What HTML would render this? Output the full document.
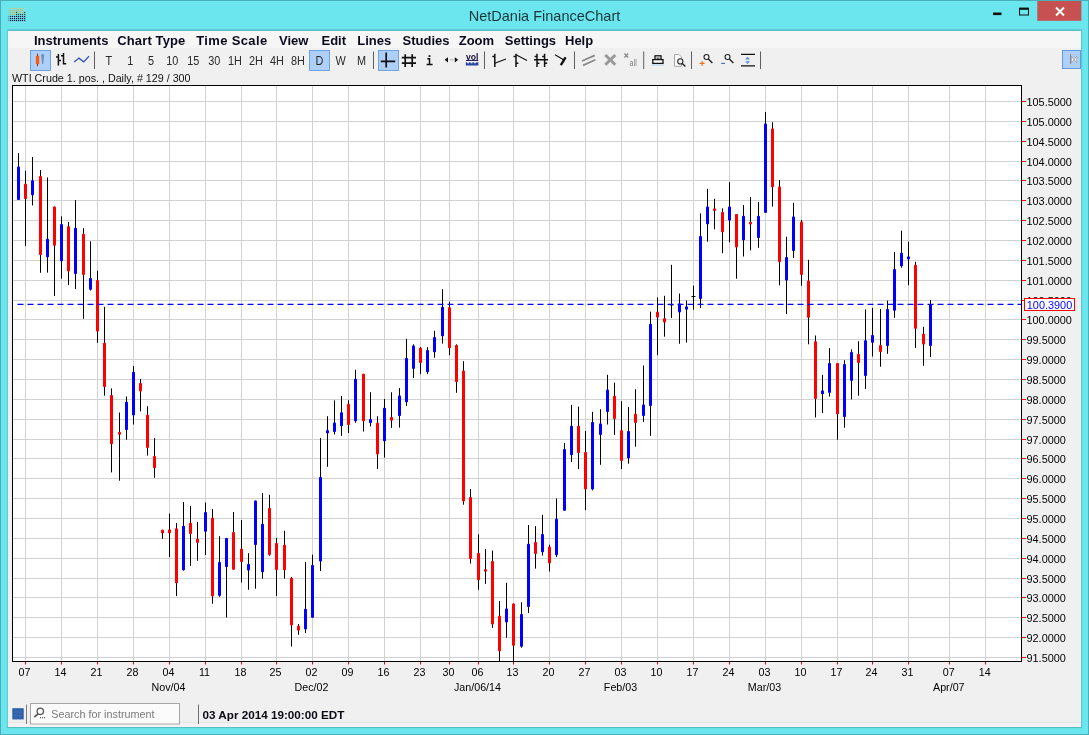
<!DOCTYPE html>
<html><head><meta charset="utf-8"><title>NetDania FinanceChart</title>
<style>html,body{margin:0;padding:0;background:#6be6ee;overflow:hidden}body{width:1089px;height:735px;position:relative;font-family:"Liberation Sans",Arial,sans-serif}</style>
</head><body>
<svg width="1089" height="735" viewBox="0 0 1089 735" style="position:absolute;left:0;top:0;display:block" font-family="Liberation Sans, Arial, sans-serif">
<defs><filter id="gs" filterUnits="userSpaceOnUse" x="0" y="0" width="1089" height="735" color-interpolation-filters="sRGB"><feOffset dx="0" dy="0"/></filter></defs><g filter="url(#gs)">
<rect x="0" y="0" width="1089" height="735" fill="#6be6ee"/>
<rect x="0.5" y="0.5" width="1088" height="734" fill="none" stroke="#49aeb8"/>
<rect x="7" y="29.3" width="1075" height="1.7" fill="#5abfc8"/>
<rect x="6.8" y="29" width="1.2" height="699" fill="#5fd0d8"/><rect x="1081" y="29" width="1.2" height="699" fill="#5cc8d0"/><rect x="7" y="727" width="1075" height="1.2" fill="#56bec6"/>
<rect x="8" y="31" width="1073" height="696" fill="#f0f0f0"/>
<rect x="8" y="722" width="1073" height="1" fill="#e3e7e3"/><rect x="8" y="723" width="1073" height="4" fill="#f4f2f4"/>
<rect x="8" y="31" width="1073" height="17" fill="#f6f6f6"/>
<rect x="7.9" y="7.9" width="1.2" height="1.2" fill="#dcc070" opacity="0.35"/>
<rect x="9.9" y="7.9" width="1.2" height="1.2" fill="#dcc070"/>
<rect x="11.9" y="7.9" width="1.2" height="1.2" fill="#dcc070"/>
<rect x="14.0" y="7.9" width="1.2" height="1.2" fill="#dcc070"/>
<rect x="16.0" y="7.9" width="1.2" height="1.2" fill="#dcc070"/>
<rect x="18.0" y="7.9" width="1.2" height="1.2" fill="#dcc070"/>
<rect x="20.0" y="7.9" width="1.2" height="1.2" fill="#dcc070"/>
<rect x="22.0" y="7.9" width="1.2" height="1.2" fill="#dcc070"/>
<rect x="24.1" y="7.9" width="1.2" height="1.2" fill="#9adbe6"/>
<rect x="7.9" y="9.9" width="1.2" height="1.2" fill="#e2b04c" opacity="0.35"/>
<rect x="9.9" y="9.9" width="1.2" height="1.2" fill="#e2b04c"/>
<rect x="11.9" y="9.9" width="1.2" height="1.2" fill="#e2b04c"/>
<rect x="14.0" y="9.9" width="1.2" height="1.2" fill="#e2b04c"/>
<rect x="16.0" y="9.9" width="1.2" height="1.2" fill="#e2b04c"/>
<rect x="18.0" y="9.9" width="1.2" height="1.2" fill="#e2b04c"/>
<rect x="20.0" y="9.9" width="1.2" height="1.2" fill="#e2b04c"/>
<rect x="22.0" y="9.9" width="1.2" height="1.2" fill="#e2b04c"/>
<rect x="24.1" y="9.9" width="1.2" height="1.2" fill="#9adbe6"/>
<rect x="7.9" y="11.9" width="1.2" height="1.2" fill="#e2b04c" opacity="0.35"/>
<rect x="9.9" y="11.9" width="1.2" height="1.2" fill="#e2b04c"/>
<rect x="11.9" y="11.9" width="1.2" height="1.2" fill="#e2b04c"/>
<rect x="14.0" y="11.9" width="1.2" height="1.2" fill="#e2b04c"/>
<rect x="16.0" y="11.9" width="1.2" height="1.2" fill="#3a4a2a"/>
<rect x="18.0" y="11.9" width="1.2" height="1.2" fill="#e2b04c"/>
<rect x="20.0" y="11.9" width="1.2" height="1.2" fill="#e2b04c"/>
<rect x="22.0" y="11.9" width="1.2" height="1.2" fill="#e2b04c"/>
<rect x="24.1" y="11.9" width="1.2" height="1.2" fill="#3a4a2a"/>
<rect x="7.9" y="13.9" width="1.2" height="1.2" fill="#e2b04c" opacity="0.35"/>
<rect x="9.9" y="13.9" width="1.2" height="1.2" fill="#e2b04c"/>
<rect x="11.9" y="13.9" width="1.2" height="1.2" fill="#e2b04c"/>
<rect x="14.0" y="13.9" width="1.2" height="1.2" fill="#e2b04c"/>
<rect x="16.0" y="13.9" width="1.2" height="1.2" fill="#3a4a2a"/>
<rect x="18.0" y="13.9" width="1.2" height="1.2" fill="#3a4a2a"/>
<rect x="20.0" y="13.9" width="1.2" height="1.2" fill="#3a4a2a"/>
<rect x="22.0" y="13.9" width="1.2" height="1.2" fill="#3a4a2a"/>
<rect x="24.1" y="13.9" width="1.2" height="1.2" fill="#3a4a2a"/>
<rect x="7.9" y="15.9" width="1.2" height="1.2" fill="#2a0c3c" opacity="0.35"/>
<rect x="9.9" y="15.9" width="1.2" height="1.2" fill="#2a0c3c"/>
<rect x="11.9" y="15.9" width="1.2" height="1.2" fill="#2a0c3c"/>
<rect x="14.0" y="15.9" width="1.2" height="1.2" fill="#2a0c3c"/>
<rect x="16.0" y="15.9" width="1.2" height="1.2" fill="#2a0c3c"/>
<rect x="18.0" y="15.9" width="1.2" height="1.2" fill="#2a0c3c"/>
<rect x="20.0" y="15.9" width="1.2" height="1.2" fill="#2a0c3c"/>
<rect x="22.0" y="15.9" width="1.2" height="1.2" fill="#2a0c3c"/>
<rect x="24.1" y="15.9" width="1.2" height="1.2" fill="#2a0c3c"/>
<rect x="7.9" y="17.9" width="1.2" height="1.2" fill="#2a0c3c" opacity="0.35"/>
<rect x="9.9" y="17.9" width="1.2" height="1.2" fill="#2a0c3c"/>
<rect x="11.9" y="17.9" width="1.2" height="1.2" fill="#2a0c3c"/>
<rect x="14.0" y="17.9" width="1.2" height="1.2" fill="#2a0c3c"/>
<rect x="16.0" y="17.9" width="1.2" height="1.2" fill="#2a0c3c"/>
<rect x="18.0" y="17.9" width="1.2" height="1.2" fill="#2a0c3c"/>
<rect x="20.0" y="17.9" width="1.2" height="1.2" fill="#2a0c3c"/>
<rect x="22.0" y="17.9" width="1.2" height="1.2" fill="#2a0c3c"/>
<rect x="24.1" y="17.9" width="1.2" height="1.2" fill="#2a0c3c"/>
<rect x="7.9" y="19.9" width="1.2" height="1.2" fill="#2a0c3c" opacity="0.35"/>
<rect x="9.9" y="19.9" width="1.2" height="1.2" fill="#2a0c3c"/>
<rect x="11.9" y="19.9" width="1.2" height="1.2" fill="#2a0c3c"/>
<rect x="14.0" y="19.9" width="1.2" height="1.2" fill="#2a0c3c"/>
<rect x="16.0" y="19.9" width="1.2" height="1.2" fill="#2a0c3c"/>
<rect x="18.0" y="19.9" width="1.2" height="1.2" fill="#2a0c3c"/>
<rect x="20.0" y="19.9" width="1.2" height="1.2" fill="#2a0c3c"/>
<rect x="22.0" y="19.9" width="1.2" height="1.2" fill="#2a0c3c"/>
<rect x="24.1" y="19.9" width="1.2" height="1.2" fill="#2a0c3c"/>
<rect x="7.9" y="21.9" width="1.2" height="1.2" fill="#a8d8ee" opacity="0.35"/>
<rect x="9.9" y="21.9" width="1.2" height="1.2" fill="#a8d8ee" opacity="0.35"/>
<rect x="11.9" y="21.9" width="1.2" height="1.2" fill="#a8d8ee" opacity="0.35"/>
<rect x="14.0" y="21.9" width="1.2" height="1.2" fill="#a8d8ee" opacity="0.35"/>
<rect x="16.0" y="21.9" width="1.2" height="1.2" fill="#a8d8ee" opacity="0.35"/>
<rect x="18.0" y="21.9" width="1.2" height="1.2" fill="#a8d8ee" opacity="0.35"/>
<rect x="20.0" y="21.9" width="1.2" height="1.2" fill="#a8d8ee" opacity="0.35"/>
<rect x="22.0" y="21.9" width="1.2" height="1.2" fill="#a8d8ee" opacity="0.35"/>
<rect x="24.1" y="21.9" width="1.2" height="1.2" fill="#a8d8ee" opacity="0.35"/>
<text x="544.5" y="20.6" font-size="14.5" text-anchor="middle" fill="#1a383c">NetDania FinanceChart</text>
<rect x="993" y="12.5" width="8.5" height="2.6" fill="#101010"/>
<rect x="1019.5" y="8.6" width="9" height="6.4" fill="none" stroke="#101010" stroke-width="1"/>
<rect x="1019" y="7.6" width="10" height="2.2" fill="#101010"/>
<rect x="1037.3" y="1" width="44.1" height="19.8" fill="#c75050"/>
<path d="M1056 7.5 L1064 15.5 M1064 7.5 L1056 15.5" stroke="#fff" stroke-width="1.9" fill="none"/>
<text x="34" y="44.6" font-size="13" font-weight="bold" fill="#0a0a1e">Instruments</text>
<text x="117.3" y="44.6" font-size="13" font-weight="bold" fill="#0a0a1e" letter-spacing="0.12">Chart Type</text>
<text x="196.3" y="44.6" font-size="13" font-weight="bold" fill="#0a0a1e" letter-spacing="0.35">Time Scale</text>
<text x="279" y="44.6" font-size="13" font-weight="bold" fill="#0a0a1e">View</text>
<text x="321.5" y="44.6" font-size="13" font-weight="bold" fill="#0a0a1e">Edit</text>
<text x="357.3" y="44.6" font-size="13" font-weight="bold" fill="#0a0a1e">Lines</text>
<text x="402.5" y="44.6" font-size="13" font-weight="bold" fill="#0a0a1e">Studies</text>
<text x="458.7" y="44.6" font-size="13" font-weight="bold" fill="#0a0a1e">Zoom</text>
<text x="504.8" y="44.6" font-size="13" font-weight="bold" fill="#0a0a1e">Settings</text>
<text x="565" y="44.6" font-size="13" font-weight="bold" fill="#0a0a1e">Help</text>
<rect x="30.5" y="50.5" width="20" height="20" fill="#aecff7" stroke="#6ea2e2"/>
<rect x="37" y="53.6" width="1" height="12.6" fill="#903808"/><rect x="35.9" y="55.8" width="3.3" height="8.3" fill="#ff5a08"/>
<path d="M41.3 55.2 Q41.3 54 42.7 54 Q44.1 54 44.1 55.2 L43.2 64 H42.2 Z" fill="#6a8cc0"/>
<path d="M58.4 54 V65.6 M56 57 H58.4 M58.4 60.4 H61 M63.5 53 V64.6 M61 55.8 H63.5 M63.5 63.7 H66.2" stroke="#111" stroke-width="1.5" fill="none"/>
<path d="M74.2 61.9 L78.9 58.1 L83.7 61.9 L89 56.2" stroke="#3058b8" stroke-width="1.35" fill="none"/>
<rect x="94.0" y="51.5" width="1" height="17.5" fill="#5e5e5e"/>
<rect x="309.5" y="50.5" width="20" height="20" fill="#aecff7" stroke="#6ea2e2"/>
<text transform="translate(108.8,65) scale(0.8,1)" font-size="13.6" text-anchor="middle" fill="#2a2a2a">T</text>
<text transform="translate(130.3,65) scale(0.8,1)" font-size="13.6" text-anchor="middle" fill="#2a2a2a">1</text>
<text transform="translate(151,65) scale(0.8,1)" font-size="13.6" text-anchor="middle" fill="#2a2a2a">5</text>
<text transform="translate(172.2,65) scale(0.8,1)" font-size="13.6" text-anchor="middle" fill="#2a2a2a">10</text>
<text transform="translate(193.2,65) scale(0.8,1)" font-size="13.6" text-anchor="middle" fill="#2a2a2a">15</text>
<text transform="translate(214.2,65) scale(0.8,1)" font-size="13.6" text-anchor="middle" fill="#2a2a2a">30</text>
<text transform="translate(235,65) scale(0.8,1)" font-size="13.6" text-anchor="middle" fill="#2a2a2a">1H</text>
<text transform="translate(256,65) scale(0.8,1)" font-size="13.6" text-anchor="middle" fill="#2a2a2a">2H</text>
<text transform="translate(277,65) scale(0.8,1)" font-size="13.6" text-anchor="middle" fill="#2a2a2a">4H</text>
<text transform="translate(298,65) scale(0.8,1)" font-size="13.6" text-anchor="middle" fill="#2a2a2a">8H</text>
<text transform="translate(319.5,65) scale(0.8,1)" font-size="13.6" text-anchor="middle" fill="#2a2a2a">D</text>
<text transform="translate(340.5,65) scale(0.8,1)" font-size="13.6" text-anchor="middle" fill="#2a2a2a">W</text>
<text transform="translate(361.5,65) scale(0.8,1)" font-size="13.6" text-anchor="middle" fill="#2a2a2a">M</text>
<rect x="373.0" y="51.5" width="1" height="17.5" fill="#5e5e5e"/>
<rect x="378.5" y="50.5" width="20" height="20" fill="#aecff7" stroke="#6ea2e2"/>
<path d="M386.2 52.5 V67.5 M380.8 61.3 H395.2" stroke="#111" stroke-width="1.7" fill="none"/>
<path d="M405.2 54.3 V67 M412.2 54.3 V67 M401.8 57.7 H416 M401.8 63.2 H416" stroke="#111" stroke-width="1.7" fill="none"/>
<rect x="428.6" y="55.2" width="1.8" height="1.8" fill="#111"/><path d="M427.3 58.8 H429.5 V64.3 M426.6 64.5 H432.6" stroke="#111" stroke-width="1.5" fill="none"/>
<path d="M444.6 59.8 L448 57.2 V62.4 Z M458.2 59.8 L454.8 57.2 V62.4 Z" fill="#111"/>
<rect x="450.3" y="59.3" width="1" height="1" fill="#777"/><rect x="452.3" y="59.3" width="1" height="1" fill="#777"/>
<text x="472.3" y="59.6" font-size="8.6" font-weight="bold" text-anchor="middle" fill="#101040">vol</text>
<rect x="466" y="60" width="12.3" height="0.9" fill="#101040"/>
<path d="M465.8 65.4 V62.2 H467.2 V63.2 H469 V62.2 H470.6 V63.2 H472.4 V62.2 H474 V63.2 H475.8 V62.2 H478.4 V65.4 Z" fill="#2848a8"/>
<rect x="484.0" y="51.5" width="1" height="17.5" fill="#5e5e5e"/>
<path d="M494.8 53.7 V67 M492.3 56.5 H494.8" stroke="#111" stroke-width="1.5" fill="none"/><path d="M494.8 63.2 L506 59" stroke="#111" stroke-width="1.1" fill="none"/>
<path d="M516 53.7 V67 M513.5 56.5 H516 M516 63.2 H518.4" stroke="#111" stroke-width="1.5" fill="none"/><path d="M516 54.8 L527 60.4" stroke="#111" stroke-width="1.1" fill="none"/>
<path d="M537 53.7 V67 M544.6 53.7 V67 M534 59.8 H548 M534.6 56.5 H537 M542.2 56.5 H544.6 M537 63.2 H539.4 M544.6 63.2 H547.2" stroke="#111" stroke-width="1.5" fill="none"/>
<path d="M555 54.8 L564 60" stroke="#111" stroke-width="1.1" fill="none"/><path d="M565.6 57.4 L560.8 65.2" stroke="#111" stroke-width="2.3" fill="none"/><path d="M562 59.5 L565.8 57.2 L564.5 61.5 Z" fill="#111"/>
<rect x="574.0" y="51.5" width="1" height="17.5" fill="#5e5e5e"/>
<path d="M582 61 L594.8 55.4 M583 65.4 L595.4 59.8" stroke="#8a8a8a" stroke-width="1.8" fill="none"/>
<path d="M605.3 55 L615.3 64.8 M615.3 55 L605.3 64.8" stroke="#999" stroke-width="3" fill="none"/>
<path d="M624.4 53.4 L628.2 57.4 M628.2 53.4 L624.4 57.4" stroke="#8c8c8c" stroke-width="1.4" fill="none"/>
<text transform="translate(633.2,65.8) scale(0.85,1)" font-size="8.5" text-anchor="middle" fill="#808080">all</text>
<rect x="643.2" y="51.5" width="1" height="17.5" fill="#5e5e5e"/>
<rect x="655" y="55.8" width="6" height="5" fill="#fff" stroke="#111" stroke-width="1.3"/><rect x="652.8" y="59.6" width="10.2" height="3.8" fill="#fff" stroke="#111" stroke-width="1.3"/><rect x="656.4" y="57.6" width="3.2" height="1" fill="#111"/>
<rect x="651.5" y="64.6" width="12.5" height="1" fill="#b8d8f4"/>
<path d="M674.5 54.5 H679 L681.5 57 V66.3 H674.5 Z" fill="#fafafa" stroke="#a0a0a0" stroke-width="0.9"/>
<circle cx="680.3" cy="61.4" r="2.6" fill="#f4f4f4" stroke="#222" stroke-width="1.05"/><path d="M682.3 63.4 L685.3 66.5" stroke="#222" stroke-width="1.4"/>
<rect x="691.0" y="51.5" width="1" height="17.5" fill="#5e5e5e"/>
<circle cx="706.5" cy="57" r="2.5" fill="#f6f6f6" stroke="#222" stroke-width="1.1"/><path d="M708.4 58.9 L712.4 62.9" stroke="#222" stroke-width="1.4"/>
<path d="M699.6 63.4 H704.6 M702.1 60.9 V65.9" stroke="#f07010" stroke-width="1.1"/>
<circle cx="727.5" cy="57" r="2.5" fill="#f6f6f6" stroke="#222" stroke-width="1.1"/><path d="M729.4 58.9 L733.4 62.9" stroke="#222" stroke-width="1.4"/>
<path d="M721.2 63.4 H725" stroke="#3a6cc8" stroke-width="1.1"/>
<path d="M741 54.4 H755 M741 65.9 H755" stroke="#111" stroke-width="1.4"/><path d="M747.6 56.8 L750 59.6 H745.2 Z M747.6 64 L750 61.2 H745.2 Z" fill="#5a8ad8"/>
<rect x="760.0" y="51.5" width="1" height="17.5" fill="#5e5e5e"/>
<rect x="1062.5" y="50.5" width="18" height="18" fill="#aed0f8" stroke="#6199de"/>
<rect x="1070" y="53.8" width="1" height="10.2" fill="#8c8c8c"/><path d="M1071.4 56 L1076.8 63 V56 L1071.4 63 Z" fill="#f2f2f2" stroke="#a0a0a0" stroke-width="0.8"/>
<text x="12" y="82.3" font-size="10.72" fill="#111">WTI Crude 1. pos. , Daily, # 129 / 300</text>
<rect x="12.5" y="85.5" width="1009.0" height="576.0" fill="#ffffff"/>
<rect x="12.5" y="657" width="1009.0" height="1" fill="#d2d2d2"/>
<rect x="12.5" y="637" width="1009.0" height="1" fill="#d2d2d2"/>
<rect x="12.5" y="617" width="1009.0" height="1" fill="#d2d2d2"/>
<rect x="12.5" y="597" width="1009.0" height="1" fill="#d2d2d2"/>
<rect x="12.5" y="578" width="1009.0" height="1" fill="#d2d2d2"/>
<rect x="12.5" y="558" width="1009.0" height="1" fill="#d2d2d2"/>
<rect x="12.5" y="538" width="1009.0" height="1" fill="#d2d2d2"/>
<rect x="12.5" y="518" width="1009.0" height="1" fill="#d2d2d2"/>
<rect x="12.5" y="498" width="1009.0" height="1" fill="#d2d2d2"/>
<rect x="12.5" y="478" width="1009.0" height="1" fill="#d2d2d2"/>
<rect x="12.5" y="458" width="1009.0" height="1" fill="#d2d2d2"/>
<rect x="12.5" y="439" width="1009.0" height="1" fill="#d2d2d2"/>
<rect x="12.5" y="419" width="1009.0" height="1" fill="#d2d2d2"/>
<rect x="12.5" y="399" width="1009.0" height="1" fill="#d2d2d2"/>
<rect x="12.5" y="379" width="1009.0" height="1" fill="#d2d2d2"/>
<rect x="12.5" y="359" width="1009.0" height="1" fill="#d2d2d2"/>
<rect x="12.5" y="339" width="1009.0" height="1" fill="#d2d2d2"/>
<rect x="12.5" y="319" width="1009.0" height="1" fill="#d2d2d2"/>
<rect x="12.5" y="300" width="1009.0" height="1" fill="#d2d2d2"/>
<rect x="12.5" y="280" width="1009.0" height="1" fill="#d2d2d2"/>
<rect x="12.5" y="260" width="1009.0" height="1" fill="#d2d2d2"/>
<rect x="12.5" y="240" width="1009.0" height="1" fill="#d2d2d2"/>
<rect x="12.5" y="220" width="1009.0" height="1" fill="#d2d2d2"/>
<rect x="12.5" y="200" width="1009.0" height="1" fill="#d2d2d2"/>
<rect x="12.5" y="180" width="1009.0" height="1" fill="#d2d2d2"/>
<rect x="12.5" y="161" width="1009.0" height="1" fill="#d2d2d2"/>
<rect x="12.5" y="141" width="1009.0" height="1" fill="#d2d2d2"/>
<rect x="12.5" y="121" width="1009.0" height="1" fill="#d2d2d2"/>
<rect x="12.5" y="101" width="1009.0" height="1" fill="#d2d2d2"/>
<rect x="25" y="85.5" width="1" height="576.0" fill="#d2d2d2"/>
<rect x="61" y="85.5" width="1" height="576.0" fill="#d2d2d2"/>
<rect x="97" y="85.5" width="1" height="576.0" fill="#d2d2d2"/>
<rect x="133" y="85.5" width="1" height="576.0" fill="#d2d2d2"/>
<rect x="169" y="85.5" width="1" height="576.0" fill="#d2d2d2"/>
<rect x="205" y="85.5" width="1" height="576.0" fill="#d2d2d2"/>
<rect x="241" y="85.5" width="1" height="576.0" fill="#d2d2d2"/>
<rect x="276" y="85.5" width="1" height="576.0" fill="#d2d2d2"/>
<rect x="312" y="85.5" width="1" height="576.0" fill="#d2d2d2"/>
<rect x="348" y="85.5" width="1" height="576.0" fill="#d2d2d2"/>
<rect x="384" y="85.5" width="1" height="576.0" fill="#d2d2d2"/>
<rect x="420" y="85.5" width="1" height="576.0" fill="#d2d2d2"/>
<rect x="449" y="85.5" width="1" height="576.0" fill="#d2d2d2"/>
<rect x="478" y="85.5" width="1" height="576.0" fill="#d2d2d2"/>
<rect x="513" y="85.5" width="1" height="576.0" fill="#d2d2d2"/>
<rect x="549" y="85.5" width="1" height="576.0" fill="#d2d2d2"/>
<rect x="585" y="85.5" width="1" height="576.0" fill="#d2d2d2"/>
<rect x="621" y="85.5" width="1" height="576.0" fill="#d2d2d2"/>
<rect x="657" y="85.5" width="1" height="576.0" fill="#d2d2d2"/>
<rect x="693" y="85.5" width="1" height="576.0" fill="#d2d2d2"/>
<rect x="729" y="85.5" width="1" height="576.0" fill="#d2d2d2"/>
<rect x="765" y="85.5" width="1" height="576.0" fill="#d2d2d2"/>
<rect x="801" y="85.5" width="1" height="576.0" fill="#d2d2d2"/>
<rect x="837" y="85.5" width="1" height="576.0" fill="#d2d2d2"/>
<rect x="872" y="85.5" width="1" height="576.0" fill="#d2d2d2"/>
<rect x="908" y="85.5" width="1" height="576.0" fill="#d2d2d2"/>
<rect x="949" y="85.5" width="1" height="576.0" fill="#d2d2d2"/>
<rect x="985" y="85.5" width="1" height="576.0" fill="#d2d2d2"/>
<rect x="12.5" y="307.5" width="1009.0" height="1" fill="#f6f6d0" opacity="0.8"/>
<g fill="#000"><rect x="18" y="153.1" width="1" height="46.9"/><rect x="25" y="170.7" width="1" height="75.4"/><rect x="32" y="157.0" width="1" height="48.4"/><rect x="40" y="170.1" width="1" height="102.7"/><rect x="47" y="177.5" width="1" height="95.1"/><rect x="54" y="206.5" width="1" height="89.5"/><rect x="61" y="216.3" width="1" height="62.3"/><rect x="68" y="221.9" width="1" height="63.2"/><rect x="75" y="200.1" width="1" height="88.9"/><rect x="83" y="228.2" width="1" height="90.6"/><rect x="90" y="241.3" width="1" height="49.3"/><rect x="97" y="270.6" width="1" height="72.2"/><rect x="104" y="306.8" width="1" height="88.8"/><rect x="111" y="388.5" width="1" height="83.9"/><rect x="119" y="412.5" width="1" height="68.2"/><rect x="126" y="396.4" width="1" height="43.3"/><rect x="133" y="366.1" width="1" height="58.4"/><rect x="140" y="379.0" width="1" height="32.4"/><rect x="147" y="406.2" width="1" height="49.4"/><rect x="154" y="438.2" width="1" height="39.6"/><rect x="162" y="529.8" width="1" height="9.0"/><rect x="169" y="513.6" width="1" height="43.5"/><rect x="176" y="523.1" width="1" height="73.0"/><rect x="183" y="502.0" width="1" height="68.6"/><rect x="190" y="505.9" width="1" height="59.9"/><rect x="197" y="522.0" width="1" height="38.8"/><rect x="205" y="502.5" width="1" height="52.4"/><rect x="212" y="509.1" width="1" height="94.6"/><rect x="219" y="536.2" width="1" height="60.6"/><rect x="226" y="537.9" width="1" height="79.6"/><rect x="233" y="512.0" width="1" height="57.8"/><rect x="241" y="520.0" width="1" height="62.5"/><rect x="248" y="553.2" width="1" height="36.5"/><rect x="255" y="500.6" width="1" height="88.1"/><rect x="262" y="493.0" width="1" height="85.7"/><rect x="269" y="494.8" width="1" height="61.0"/><rect x="276" y="537.9" width="1" height="58.2"/><rect x="284" y="530.8" width="1" height="47.9"/><rect x="291" y="577.0" width="1" height="69.5"/><rect x="298" y="624.1" width="1" height="10.7"/><rect x="305" y="561.9" width="1" height="71.1"/><rect x="312" y="554.7" width="1" height="63.1"/><rect x="320" y="438.0" width="1" height="133.0"/><rect x="327" y="416.2" width="1" height="50.6"/><rect x="334" y="400.3" width="1" height="34.2"/><rect x="341" y="396.0" width="1" height="39.8"/><rect x="348" y="400.3" width="1" height="32.7"/><rect x="355" y="369.8" width="1" height="52.9"/><rect x="363" y="373.8" width="1" height="57.7"/><rect x="370" y="392.2" width="1" height="34.2"/><rect x="377" y="416.2" width="1" height="52.7"/><rect x="384" y="399.0" width="1" height="58.6"/><rect x="391" y="392.2" width="1" height="35.6"/><rect x="399" y="388.1" width="1" height="39.5"/><rect x="406" y="338.8" width="1" height="67.1"/><rect x="413" y="344.3" width="1" height="33.7"/><rect x="420" y="347.1" width="1" height="27.0"/><rect x="427" y="347.1" width="1" height="27.0"/><rect x="434" y="330.8" width="1" height="27.0"/><rect x="442" y="289.2" width="1" height="54.4"/><rect x="449" y="301.8" width="1" height="53.4"/><rect x="456" y="344.3" width="1" height="48.5"/><rect x="463" y="361.2" width="1" height="143.5"/><rect x="470" y="489.0" width="1" height="74.6"/><rect x="478" y="534.4" width="1" height="55.4"/><rect x="485" y="549.0" width="1" height="34.9"/><rect x="492" y="550.5" width="1" height="77.3"/><rect x="499" y="601.0" width="1" height="60.0"/><rect x="506" y="582.8" width="1" height="55.0"/><rect x="513" y="603.4" width="1" height="57.6"/><rect x="521" y="602.2" width="1" height="45.5"/><rect x="528" y="525.0" width="1" height="88.0"/><rect x="535" y="526.1" width="1" height="42.5"/><rect x="542" y="514.8" width="1" height="40.8"/><rect x="549" y="544.7" width="1" height="26.8"/><rect x="556" y="498.4" width="1" height="58.7"/><rect x="564" y="443.0" width="1" height="67.8"/><rect x="571" y="404.9" width="1" height="57.0"/><rect x="578" y="406.6" width="1" height="62.5"/><rect x="585" y="431.0" width="1" height="79.1"/><rect x="592" y="411.8" width="1" height="78.5"/><rect x="600" y="409.2" width="1" height="55.6"/><rect x="607" y="374.8" width="1" height="49.7"/><rect x="614" y="382.6" width="1" height="52.3"/><rect x="621" y="401.2" width="1" height="67.9"/><rect x="628" y="407.0" width="1" height="56.7"/><rect x="635" y="389.2" width="1" height="57.5"/><rect x="643" y="365.5" width="1" height="56.4"/><rect x="650" y="311.7" width="1" height="124.1"/><rect x="657" y="297.5" width="1" height="57.7"/><rect x="664" y="295.8" width="1" height="40.9"/><rect x="671" y="264.8" width="1" height="53.2"/><rect x="679" y="293.6" width="1" height="50.1"/><rect x="686" y="300.5" width="1" height="42.1"/><rect x="693" y="285.6" width="1" height="24.2"/><rect x="700" y="213.4" width="1" height="94.5"/><rect x="707" y="188.8" width="1" height="52.9"/><rect x="714" y="198.8" width="1" height="30.5"/><rect x="722" y="208.4" width="1" height="44.8"/><rect x="729" y="182.2" width="1" height="60.2"/><rect x="736" y="214.0" width="1" height="64.7"/><rect x="743" y="205.1" width="1" height="51.4"/><rect x="750" y="197.0" width="1" height="53.4"/><rect x="758" y="202.0" width="1" height="45.8"/><rect x="765" y="112.0" width="1" height="101.0"/><rect x="772" y="122.2" width="1" height="84.4"/><rect x="779" y="180.0" width="1" height="105.3"/><rect x="786" y="236.7" width="1" height="77.3"/><rect x="793" y="202.8" width="1" height="55.2"/><rect x="801" y="219.8" width="1" height="66.0"/><rect x="808" y="259.8" width="1" height="84.5"/><rect x="815" y="335.5" width="1" height="82.0"/><rect x="822" y="374.8" width="1" height="38.3"/><rect x="829" y="348.2" width="1" height="48.3"/><rect x="837" y="363.0" width="1" height="76.7"/><rect x="844" y="360.2" width="1" height="67.5"/><rect x="851" y="349.3" width="1" height="50.1"/><rect x="858" y="341.2" width="1" height="54.5"/><rect x="865" y="309.4" width="1" height="79.5"/><rect x="872" y="307.9" width="1" height="48.6"/><rect x="880" y="309.0" width="1" height="57.7"/><rect x="887" y="300.6" width="1" height="53.2"/><rect x="894" y="252.0" width="1" height="65.8"/><rect x="901" y="230.7" width="1" height="37.0"/><rect x="908" y="241.6" width="1" height="43.6"/><rect x="915" y="261.8" width="1" height="86.1"/><rect x="923" y="326.8" width="1" height="39.0"/><rect x="930" y="300.0" width="1" height="57.0"/></g>
<rect x="17" y="166.6" width="3" height="33.4" rx="0.8" fill="#0000ff"/><rect x="24" y="183.8" width="3" height="15.3" rx="0.8" fill="#ff0000"/><rect x="31" y="180.3" width="3" height="14.9" rx="0.8" fill="#0000ff"/><rect x="39" y="175.9" width="3" height="79.1" rx="0.8" fill="#ff0000"/><rect x="46" y="238.7" width="3" height="18.5" rx="0.8" fill="#0000ff"/><rect x="53" y="206.6" width="3" height="39.1" rx="0.8" fill="#ff0000"/><rect x="60" y="223.9" width="3" height="37.3" rx="0.8" fill="#0000ff"/><rect x="67" y="226.3" width="3" height="45.1" rx="0.8" fill="#ff0000"/><rect x="74" y="227.8" width="3" height="46.2" rx="0.8" fill="#0000ff"/><rect x="82" y="233.7" width="3" height="41.4" rx="0.8" fill="#ff0000"/><rect x="89" y="278.0" width="3" height="11.7" rx="0.8" fill="#0000ff"/><rect x="96" y="280.0" width="3" height="51.5" rx="0.8" fill="#ff0000"/><rect x="103" y="342.8" width="3" height="44.3" rx="0.8" fill="#ff0000"/><rect x="110" y="394.9" width="3" height="49.4" rx="0.8" fill="#ff0000"/><rect x="118" y="431.9" width="3" height="2.7" rx="0.5" fill="#ff0000"/><rect x="125" y="401.7" width="3" height="28.3" rx="0.8" fill="#0000ff"/><rect x="132" y="371.8" width="3" height="43.6" rx="0.8" fill="#0000ff"/><rect x="139" y="383.1" width="3" height="8.3" rx="0.8" fill="#ff0000"/><rect x="146" y="414.8" width="3" height="33.2" rx="0.8" fill="#ff0000"/><rect x="153" y="456.1" width="3" height="12.2" rx="0.8" fill="#ff0000"/><rect x="161" y="529.8" width="3" height="3.4" rx="0.5" fill="#ff0000"/><rect x="168" y="529.4" width="3" height="3.9" rx="0.5" fill="#ff0000"/><rect x="175" y="528.2" width="3" height="55.1" rx="0.8" fill="#ff0000"/><rect x="182" y="525.8" width="3" height="44.4" rx="0.8" fill="#0000ff"/><rect x="189" y="522.8" width="3" height="11.2" rx="0.8" fill="#ff0000"/><rect x="196" y="538.8" width="3" height="4.1" rx="0.8" fill="#ff0000"/><rect x="204" y="512.0" width="3" height="19.7" rx="0.8" fill="#0000ff"/><rect x="211" y="517.8" width="3" height="78.6" rx="0.8" fill="#ff0000"/><rect x="218" y="562.1" width="3" height="33.8" rx="0.8" fill="#0000ff"/><rect x="225" y="538.0" width="3" height="29.0" rx="0.8" fill="#0000ff"/><rect x="232" y="531.9" width="3" height="37.9" rx="0.8" fill="#ff0000"/><rect x="240" y="548.8" width="3" height="13.3" rx="0.8" fill="#ff0000"/><rect x="247" y="564.1" width="3" height="6.4" rx="0.8" fill="#0000ff"/><rect x="254" y="500.6" width="3" height="44.5" rx="0.8" fill="#0000ff"/><rect x="261" y="523.7" width="3" height="48.6" rx="0.8" fill="#0000ff"/><rect x="268" y="507.9" width="3" height="47.1" rx="0.8" fill="#ff0000"/><rect x="275" y="542.9" width="3" height="27.1" rx="0.8" fill="#ff0000"/><rect x="283" y="544.7" width="3" height="25.5" rx="0.8" fill="#ff0000"/><rect x="290" y="577.8" width="3" height="47.6" rx="0.8" fill="#ff0000"/><rect x="297" y="625.7" width="3" height="4.9" rx="0.8" fill="#ff0000"/><rect x="304" y="608.7" width="3" height="20.7" rx="0.8" fill="#0000ff"/><rect x="311" y="565.1" width="3" height="52.7" rx="0.8" fill="#0000ff"/><rect x="319" y="477.0" width="3" height="84.5" rx="0.8" fill="#0000ff"/><rect x="326" y="430.2" width="3" height="3.1" rx="0.5" fill="#0000ff"/><rect x="333" y="422.6" width="3" height="9.5" rx="0.8" fill="#0000ff"/><rect x="340" y="412.3" width="3" height="14.0" rx="0.8" fill="#0000ff"/><rect x="347" y="403.7" width="3" height="21.4" rx="0.8" fill="#ff0000"/><rect x="354" y="378.8" width="3" height="42.5" rx="0.8" fill="#0000ff"/><rect x="362" y="373.8" width="3" height="47.5" rx="0.8" fill="#ff0000"/><rect x="369" y="418.9" width="3" height="4.2" rx="0.8" fill="#0000ff"/><rect x="376" y="422.8" width="3" height="31.6" rx="0.8" fill="#ff0000"/><rect x="383" y="407.8" width="3" height="33.4" rx="0.8" fill="#0000ff"/><rect x="390" y="416.9" width="3" height="3.5" rx="0.5" fill="#ff0000"/><rect x="398" y="395.6" width="3" height="20.4" rx="0.8" fill="#0000ff"/><rect x="405" y="358.0" width="3" height="44.3" rx="0.8" fill="#0000ff"/><rect x="412" y="345.6" width="3" height="23.3" rx="0.8" fill="#0000ff"/><rect x="419" y="347.8" width="3" height="15.3" rx="0.8" fill="#ff0000"/><rect x="426" y="350.0" width="3" height="22.2" rx="0.8" fill="#0000ff"/><rect x="433" y="336.9" width="3" height="15.3" rx="0.8" fill="#0000ff"/><rect x="441" y="306.8" width="3" height="29.5" rx="0.8" fill="#0000ff"/><rect x="448" y="307.3" width="3" height="40.9" rx="0.8" fill="#ff0000"/><rect x="455" y="345.0" width="3" height="37.0" rx="0.8" fill="#ff0000"/><rect x="462" y="370.5" width="3" height="130.9" rx="0.8" fill="#ff0000"/><rect x="469" y="496.9" width="3" height="62.2" rx="0.8" fill="#ff0000"/><rect x="477" y="553.0" width="3" height="27.2" rx="0.8" fill="#ff0000"/><rect x="484" y="569.3" width="3" height="2.2" rx="0.5" fill="#ff0000"/><rect x="491" y="561.0" width="3" height="63.4" rx="0.8" fill="#ff0000"/><rect x="498" y="615.8" width="3" height="35.4" rx="0.8" fill="#ff0000"/><rect x="505" y="608.6" width="3" height="13.8" rx="0.8" fill="#0000ff"/><rect x="512" y="603.4" width="3" height="42.4" rx="0.8" fill="#ff0000"/><rect x="520" y="613.9" width="3" height="32.8" rx="0.8" fill="#0000ff"/><rect x="527" y="543.8" width="3" height="63.2" rx="0.8" fill="#0000ff"/><rect x="534" y="542.1" width="3" height="12.0" rx="0.8" fill="#ff0000"/><rect x="541" y="534.0" width="3" height="18.3" rx="0.8" fill="#0000ff"/><rect x="548" y="546.4" width="3" height="17.0" rx="0.8" fill="#ff0000"/><rect x="555" y="518.8" width="3" height="36.4" rx="0.8" fill="#0000ff"/><rect x="563" y="449.1" width="3" height="61.7" rx="0.8" fill="#0000ff"/><rect x="570" y="425.8" width="3" height="29.4" rx="0.8" fill="#0000ff"/><rect x="577" y="425.8" width="3" height="27.3" rx="0.8" fill="#ff0000"/><rect x="584" y="452.0" width="3" height="37.4" rx="0.8" fill="#ff0000"/><rect x="591" y="421.9" width="3" height="67.5" rx="0.8" fill="#0000ff"/><rect x="599" y="423.6" width="3" height="11.4" rx="0.8" fill="#0000ff"/><rect x="606" y="389.6" width="3" height="22.5" rx="0.8" fill="#0000ff"/><rect x="613" y="395.7" width="3" height="23.4" rx="0.8" fill="#ff0000"/><rect x="620" y="430.2" width="3" height="30.9" rx="0.8" fill="#ff0000"/><rect x="627" y="431.0" width="3" height="27.3" rx="0.8" fill="#0000ff"/><rect x="634" y="413.8" width="3" height="9.2" rx="0.8" fill="#ff0000"/><rect x="642" y="404.6" width="3" height="11.4" rx="0.8" fill="#0000ff"/><rect x="649" y="323.7" width="3" height="82.3" rx="0.8" fill="#0000ff"/><rect x="656" y="311.7" width="3" height="5.9" rx="0.8" fill="#ff0000"/><rect x="663" y="318.2" width="3" height="4.4" rx="0.8" fill="#ff0000"/><rect x="669.5" y="304.4" width="4" height="1" fill="#000"/><rect x="678" y="303.6" width="3" height="8.8" rx="0.8" fill="#0000ff"/><rect x="685" y="306.5" width="3" height="2.9" rx="0.5" fill="#0000ff"/><rect x="691.5" y="296.0" width="4" height="1" fill="#000"/><rect x="699" y="235.9" width="3" height="63.1" rx="0.8" fill="#0000ff"/><rect x="706" y="206.4" width="3" height="17.9" rx="0.8" fill="#0000ff"/><rect x="713" y="208.6" width="3" height="2.2" rx="0.5" fill="#ff0000"/><rect x="721" y="211.9" width="3" height="20.3" rx="0.8" fill="#ff0000"/><rect x="728" y="206.4" width="3" height="14.2" rx="0.8" fill="#0000ff"/><rect x="735" y="214.1" width="3" height="33.3" rx="0.8" fill="#ff0000"/><rect x="742" y="215.8" width="3" height="24.4" rx="0.8" fill="#0000ff"/><rect x="749" y="222.1" width="3" height="2.2" rx="0.5" fill="#ff0000"/><rect x="757" y="215.8" width="3" height="22.2" rx="0.8" fill="#0000ff"/><rect x="764" y="123.4" width="3" height="89.5" rx="0.8" fill="#0000ff"/><rect x="771" y="128.4" width="3" height="58.8" rx="0.8" fill="#ff0000"/><rect x="778" y="186.6" width="3" height="75.4" rx="0.8" fill="#ff0000"/><rect x="785" y="256.9" width="3" height="23.6" rx="0.8" fill="#0000ff"/><rect x="792" y="216.6" width="3" height="34.4" rx="0.8" fill="#0000ff"/><rect x="800" y="221.6" width="3" height="53.5" rx="0.8" fill="#ff0000"/><rect x="807" y="280.4" width="3" height="37.3" rx="0.8" fill="#ff0000"/><rect x="814" y="341.2" width="3" height="57.8" rx="0.8" fill="#ff0000"/><rect x="821" y="390.5" width="3" height="3.6" rx="0.5" fill="#0000ff"/><rect x="828" y="363.0" width="3" height="29.9" rx="0.8" fill="#0000ff"/><rect x="836" y="363.0" width="3" height="51.2" rx="0.8" fill="#ff0000"/><rect x="843" y="364.1" width="3" height="53.0" rx="0.8" fill="#0000ff"/><rect x="850" y="352.1" width="3" height="28.8" rx="0.8" fill="#0000ff"/><rect x="857" y="353.9" width="3" height="9.1" rx="0.8" fill="#ff0000"/><rect x="864" y="340.2" width="3" height="35.9" rx="0.8" fill="#0000ff"/><rect x="871" y="335.1" width="3" height="7.7" rx="0.8" fill="#0000ff"/><rect x="879" y="344.9" width="3" height="7.2" rx="0.8" fill="#ff0000"/><rect x="886" y="308.9" width="3" height="37.2" rx="0.8" fill="#0000ff"/><rect x="893" y="269.0" width="3" height="41.8" rx="0.8" fill="#0000ff"/><rect x="900" y="252.7" width="3" height="13.5" rx="0.8" fill="#0000ff"/><rect x="907" y="256.4" width="3" height="2.8" rx="0.5" fill="#0000ff"/><rect x="914" y="264.7" width="3" height="64.1" rx="0.8" fill="#ff0000"/><rect x="922" y="333.8" width="3" height="10.8" rx="0.8" fill="#ff0000"/><rect x="929" y="303.9" width="3" height="42.1" rx="0.8" fill="#0000ff"/>
<path d="M17.5 304.4 H1021.5" stroke="#0000ff" stroke-width="1.2" stroke-dasharray="6 4" fill="none"/>
<rect x="12.5" y="85.5" width="1009.0" height="576.0" fill="none" stroke="#000" stroke-width="1"/>
<rect x="1022" y="657" width="4" height="1" fill="#ff0000"/>
<text x="1026.5" y="661.9" font-size="10.9" fill="#000">91.5000</text>
<rect x="1022" y="637" width="4" height="1" fill="#ff0000"/>
<text x="1026.5" y="641.9" font-size="10.9" fill="#000">92.0000</text>
<rect x="1022" y="617" width="4" height="1" fill="#ff0000"/>
<text x="1026.5" y="621.9" font-size="10.9" fill="#000">92.5000</text>
<rect x="1022" y="597" width="4" height="1" fill="#ff0000"/>
<text x="1026.5" y="601.9" font-size="10.9" fill="#000">93.0000</text>
<rect x="1022" y="578" width="4" height="1" fill="#ff0000"/>
<text x="1026.5" y="582.9" font-size="10.9" fill="#000">93.5000</text>
<rect x="1022" y="558" width="4" height="1" fill="#ff0000"/>
<text x="1026.5" y="562.9" font-size="10.9" fill="#000">94.0000</text>
<rect x="1022" y="538" width="4" height="1" fill="#ff0000"/>
<text x="1026.5" y="542.9" font-size="10.9" fill="#000">94.5000</text>
<rect x="1022" y="518" width="4" height="1" fill="#ff0000"/>
<text x="1026.5" y="522.9" font-size="10.9" fill="#000">95.0000</text>
<rect x="1022" y="498" width="4" height="1" fill="#ff0000"/>
<text x="1026.5" y="502.9" font-size="10.9" fill="#000">95.5000</text>
<rect x="1022" y="478" width="4" height="1" fill="#ff0000"/>
<text x="1026.5" y="482.9" font-size="10.9" fill="#000">96.0000</text>
<rect x="1022" y="458" width="4" height="1" fill="#ff0000"/>
<text x="1026.5" y="462.9" font-size="10.9" fill="#000">96.5000</text>
<rect x="1022" y="439" width="4" height="1" fill="#ff0000"/>
<text x="1026.5" y="443.9" font-size="10.9" fill="#000">97.0000</text>
<rect x="1022" y="419" width="4" height="1" fill="#ff0000"/>
<text x="1026.5" y="423.9" font-size="10.9" fill="#000">97.5000</text>
<rect x="1022" y="399" width="4" height="1" fill="#ff0000"/>
<text x="1026.5" y="403.9" font-size="10.9" fill="#000">98.0000</text>
<rect x="1022" y="379" width="4" height="1" fill="#ff0000"/>
<text x="1026.5" y="383.9" font-size="10.9" fill="#000">98.5000</text>
<rect x="1022" y="359" width="4" height="1" fill="#ff0000"/>
<text x="1026.5" y="363.9" font-size="10.9" fill="#000">99.0000</text>
<rect x="1022" y="339" width="4" height="1" fill="#ff0000"/>
<text x="1026.5" y="343.9" font-size="10.9" fill="#000">99.5000</text>
<rect x="1022" y="319" width="4" height="1" fill="#ff0000"/>
<text x="1026.5" y="323.9" font-size="10.9" fill="#000">100.0000</text>
<rect x="1022" y="300" width="4" height="1" fill="#ff0000"/>
<text x="1026.5" y="304.9" font-size="10.9" fill="#000">100.5000</text>
<rect x="1022" y="280" width="4" height="1" fill="#ff0000"/>
<text x="1026.5" y="284.9" font-size="10.9" fill="#000">101.0000</text>
<rect x="1022" y="260" width="4" height="1" fill="#ff0000"/>
<text x="1026.5" y="264.9" font-size="10.9" fill="#000">101.5000</text>
<rect x="1022" y="240" width="4" height="1" fill="#ff0000"/>
<text x="1026.5" y="244.9" font-size="10.9" fill="#000">102.0000</text>
<rect x="1022" y="220" width="4" height="1" fill="#ff0000"/>
<text x="1026.5" y="224.9" font-size="10.9" fill="#000">102.5000</text>
<rect x="1022" y="200" width="4" height="1" fill="#ff0000"/>
<text x="1026.5" y="204.9" font-size="10.9" fill="#000">103.0000</text>
<rect x="1022" y="180" width="4" height="1" fill="#ff0000"/>
<text x="1026.5" y="184.9" font-size="10.9" fill="#000">103.5000</text>
<rect x="1022" y="161" width="4" height="1" fill="#ff0000"/>
<text x="1026.5" y="165.9" font-size="10.9" fill="#000">104.0000</text>
<rect x="1022" y="141" width="4" height="1" fill="#ff0000"/>
<text x="1026.5" y="145.9" font-size="10.9" fill="#000">104.5000</text>
<rect x="1022" y="121" width="4" height="1" fill="#ff0000"/>
<text x="1026.5" y="125.9" font-size="10.9" fill="#000">105.0000</text>
<rect x="1022" y="101" width="4" height="1" fill="#ff0000"/>
<text x="1026.5" y="105.9" font-size="10.9" fill="#000">105.5000</text>
<rect x="1024.5" y="298.5" width="50" height="12" fill="#fff" stroke="#ff0000" stroke-width="1"/>
<text x="1026.8" y="308.7" font-size="10.9" fill="#0000ff">100.3900</text>
<rect x="25" y="662" width="1" height="2.5" fill="#ff0000"/>
<text x="24.5" y="676.1" font-size="10.7" text-anchor="middle" fill="#000">07</text>
<rect x="61" y="662" width="1" height="2.5" fill="#ff0000"/>
<text x="60.5" y="676.1" font-size="10.7" text-anchor="middle" fill="#000">14</text>
<rect x="97" y="662" width="1" height="2.5" fill="#ff0000"/>
<text x="96.5" y="676.1" font-size="10.7" text-anchor="middle" fill="#000">21</text>
<rect x="133" y="662" width="1" height="2.5" fill="#ff0000"/>
<text x="132.5" y="676.1" font-size="10.7" text-anchor="middle" fill="#000">28</text>
<rect x="169" y="662" width="1" height="2.5" fill="#ff0000"/>
<text x="168.5" y="676.1" font-size="10.7" text-anchor="middle" fill="#000">04</text>
<rect x="205" y="662" width="1" height="2.5" fill="#ff0000"/>
<text x="204.5" y="676.1" font-size="10.7" text-anchor="middle" fill="#000">11</text>
<rect x="241" y="662" width="1" height="2.5" fill="#ff0000"/>
<text x="240.5" y="676.1" font-size="10.7" text-anchor="middle" fill="#000">18</text>
<rect x="276" y="662" width="1" height="2.5" fill="#ff0000"/>
<text x="275.5" y="676.1" font-size="10.7" text-anchor="middle" fill="#000">25</text>
<rect x="312" y="662" width="1" height="2.5" fill="#ff0000"/>
<text x="311.5" y="676.1" font-size="10.7" text-anchor="middle" fill="#000">02</text>
<rect x="348" y="662" width="1" height="2.5" fill="#ff0000"/>
<text x="347.5" y="676.1" font-size="10.7" text-anchor="middle" fill="#000">09</text>
<rect x="384" y="662" width="1" height="2.5" fill="#ff0000"/>
<text x="383.5" y="676.1" font-size="10.7" text-anchor="middle" fill="#000">16</text>
<rect x="420" y="662" width="1" height="2.5" fill="#ff0000"/>
<text x="419.5" y="676.1" font-size="10.7" text-anchor="middle" fill="#000">23</text>
<rect x="449" y="662" width="1" height="2.5" fill="#ff0000"/>
<text x="448.5" y="676.1" font-size="10.7" text-anchor="middle" fill="#000">30</text>
<rect x="478" y="662" width="1" height="2.5" fill="#ff0000"/>
<text x="477.5" y="676.1" font-size="10.7" text-anchor="middle" fill="#000">06</text>
<rect x="513" y="662" width="1" height="2.5" fill="#ff0000"/>
<text x="512.5" y="676.1" font-size="10.7" text-anchor="middle" fill="#000">13</text>
<rect x="549" y="662" width="1" height="2.5" fill="#ff0000"/>
<text x="548.5" y="676.1" font-size="10.7" text-anchor="middle" fill="#000">20</text>
<rect x="585" y="662" width="1" height="2.5" fill="#ff0000"/>
<text x="584.5" y="676.1" font-size="10.7" text-anchor="middle" fill="#000">27</text>
<rect x="621" y="662" width="1" height="2.5" fill="#ff0000"/>
<text x="620.5" y="676.1" font-size="10.7" text-anchor="middle" fill="#000">03</text>
<rect x="657" y="662" width="1" height="2.5" fill="#ff0000"/>
<text x="656.5" y="676.1" font-size="10.7" text-anchor="middle" fill="#000">10</text>
<rect x="693" y="662" width="1" height="2.5" fill="#ff0000"/>
<text x="692.5" y="676.1" font-size="10.7" text-anchor="middle" fill="#000">17</text>
<rect x="729" y="662" width="1" height="2.5" fill="#ff0000"/>
<text x="728.5" y="676.1" font-size="10.7" text-anchor="middle" fill="#000">24</text>
<rect x="765" y="662" width="1" height="2.5" fill="#ff0000"/>
<text x="764.5" y="676.1" font-size="10.7" text-anchor="middle" fill="#000">03</text>
<rect x="801" y="662" width="1" height="2.5" fill="#ff0000"/>
<text x="800.5" y="676.1" font-size="10.7" text-anchor="middle" fill="#000">10</text>
<rect x="837" y="662" width="1" height="2.5" fill="#ff0000"/>
<text x="836.5" y="676.1" font-size="10.7" text-anchor="middle" fill="#000">17</text>
<rect x="872" y="662" width="1" height="2.5" fill="#ff0000"/>
<text x="871.5" y="676.1" font-size="10.7" text-anchor="middle" fill="#000">24</text>
<rect x="908" y="662" width="1" height="2.5" fill="#ff0000"/>
<text x="907.5" y="676.1" font-size="10.7" text-anchor="middle" fill="#000">31</text>
<rect x="949" y="662" width="1" height="2.5" fill="#ff0000"/>
<text x="948.8" y="676.1" font-size="10.7" text-anchor="middle" fill="#000">07</text>
<rect x="985" y="662" width="1" height="2.5" fill="#ff0000"/>
<text x="984.7" y="676.1" font-size="10.7" text-anchor="middle" fill="#000">14</text>
<text x="168.5" y="691.0" font-size="10.7" text-anchor="middle" fill="#000">Nov/04</text>
<text x="311.5" y="691.0" font-size="10.7" text-anchor="middle" fill="#000">Dec/02</text>
<text x="477.5" y="691.0" font-size="10.7" text-anchor="middle" fill="#000">Jan/06/14</text>
<text x="620.5" y="691.0" font-size="10.7" text-anchor="middle" fill="#000">Feb/03</text>
<text x="764.5" y="691.0" font-size="10.7" text-anchor="middle" fill="#000">Mar/03</text>
<text x="948.8" y="691.0" font-size="10.7" text-anchor="middle" fill="#000">Apr/07</text>
<rect x="12.3" y="708.2" width="11.4" height="11.2" fill="#2c5fa6"/>
<path d="M16 708.2 V719.4 M19.9 708.2 V719.4 M12.3 712 H23.7 M12.3 715.7 H23.7" stroke="#4574b6" stroke-width="0.7" fill="none"/>
<rect x="26" y="704.5" width="1" height="19.5" fill="#808080"/>
<rect x="30.5" y="703.5" width="149" height="20.5" fill="#fbfbfb" stroke="#a6a6a6"/>
<circle cx="40.3" cy="711.3" r="3.2" fill="none" stroke="#555" stroke-width="1.3"/><path d="M38 713.8 L34.3 717.2" stroke="#555" stroke-width="1.6"/>
<rect x="40" y="717.2" width="1" height="1" fill="#333"/><rect x="42" y="717.2" width="1" height="1" fill="#333"/><rect x="44" y="717.2" width="1" height="1" fill="#333"/>
<text x="51.3" y="717.8" font-size="10.8" fill="#7a7a7a">Search for instrument</text>
<rect x="198" y="704.5" width="1" height="19.5" fill="#707070"/>
<text x="202.5" y="718.7" font-size="11.7" font-weight="bold" fill="#0a0a14">03 Apr 2014 19:00:00 EDT</text>
</g></svg>
</body></html>
